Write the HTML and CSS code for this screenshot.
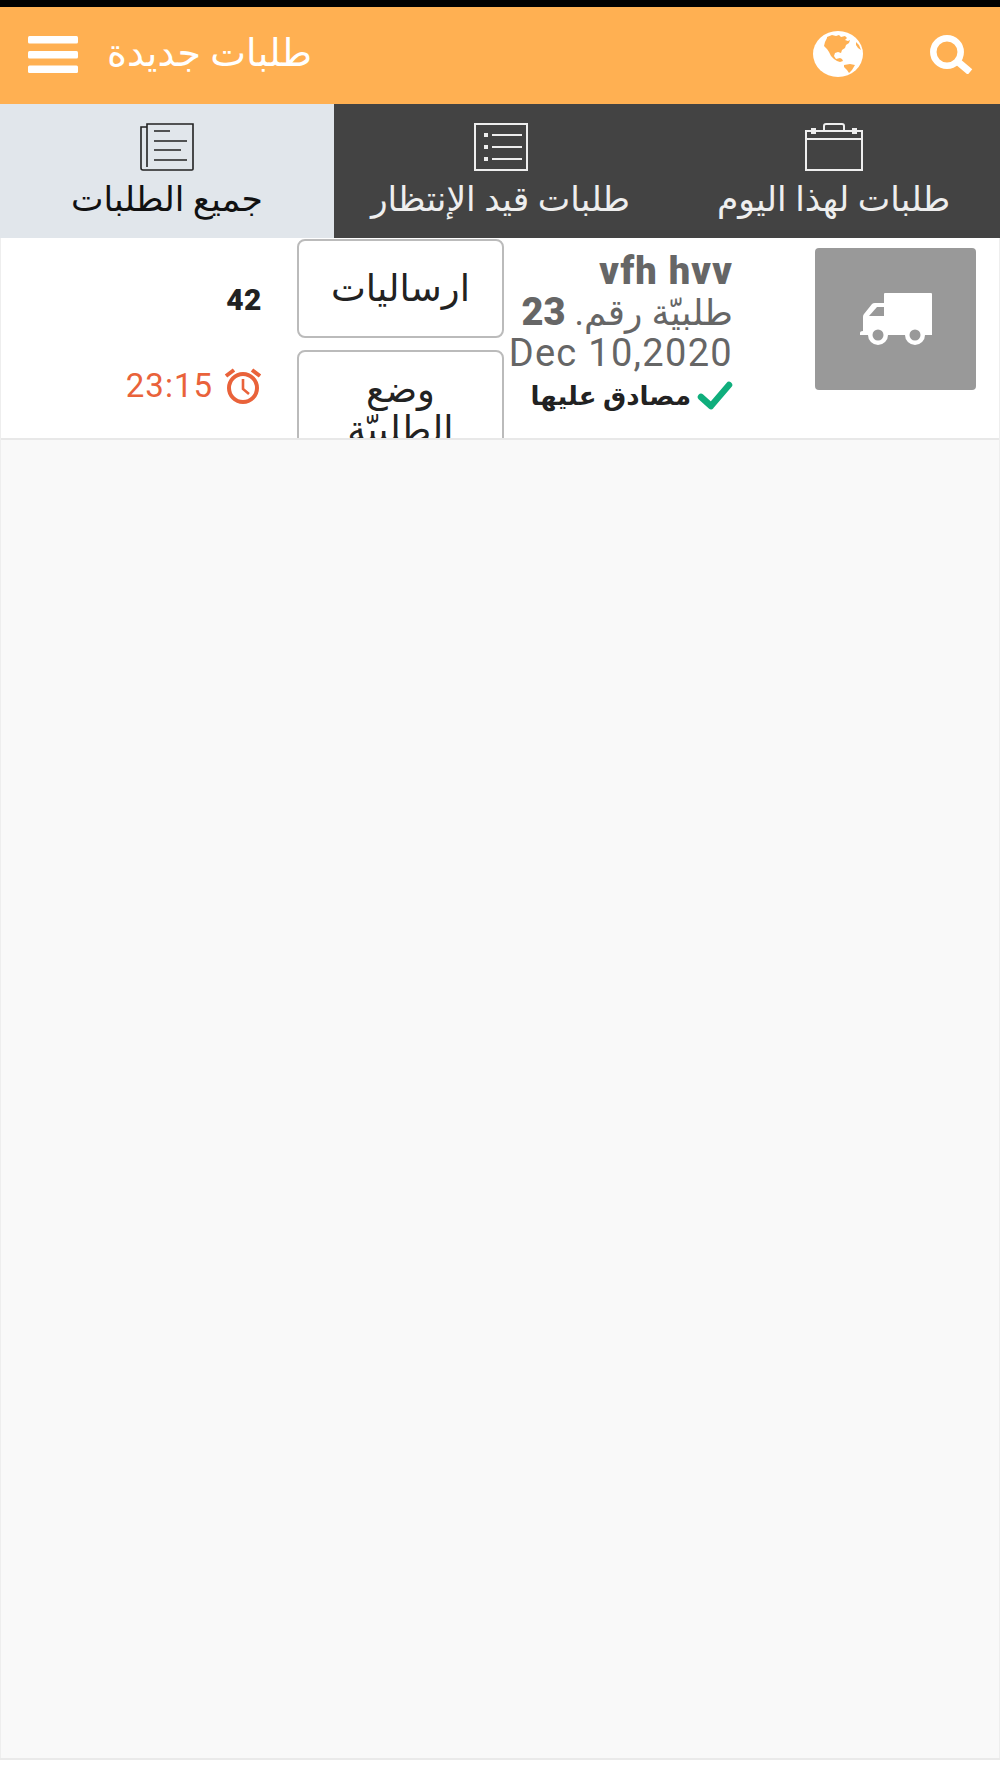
FILE: index.html
```html
<!DOCTYPE html>
<html lang="ar">
<head>
  <meta charset="UTF-8" />
  <title>طلبات جديدة</title>
  <link rel="stylesheet" href="styles.css">
</head>
<body>

<div class="status-bar"></div>

<header class="topbar">
  <div class="topbar-start">
    <svg class="menu-icon" viewBox="0 0 50 37"><rect x="0" y="0" width="50" height="7.5" rx="1.5"/><rect x="0" y="15" width="50" height="7.5" rx="1.5"/><rect x="0" y="29.5" width="50" height="7.5" rx="1.5"/></svg>
    <span class="topbar-title">طلبات جديدة</span>
  </div>
  <div class="topbar-end">
    <svg class="globe-icon" viewBox="0 0 50 46">
      <ellipse cx="25" cy="23" rx="25" ry="23" fill="#fff"/>
      <path fill="#ffb052" d="M14 6l5-2 4 1 3-1 2 2 4-1 2 2-2 2 3 1 2-1-1 3-3 2-1 3-3 2-1 3-3-1-3 1-1 3 2 3 4-1 2 1 1 2-3 1-3-1-3-2-3-3-2-4-2-3-3-3 1-4 2-4z"/>
      <path fill="#ffb052" d="M31 34l6-1 5 1-3 5-3 3-2-3-3-3zM43 11l3 3 2 5-3-2-2-3z"/>
    </svg>
    <svg class="search-icon" viewBox="0 0 43 39">
      <circle cx="17" cy="17" r="13.7" fill="none" stroke="#fff" stroke-width="6.5"/>
      <path d="M27 26l13 11" stroke="#fff" stroke-width="7" fill="none"/>
    </svg>
  </div>
</header>

<nav class="tabs">
  <div class="tab tab-active">
    <svg class="tab-icon" viewBox="0 0 54 48" fill="none" stroke="#222" stroke-width="1.6">
      <path d="M7 4H1v41q0 2 2 2h49q1 0 1-1V1H7v43"/>
      <path d="M14 8h16M14 18h33M14 27h27M14 37h33"/>
    </svg>
    <span class="tab-label">جميع الطلبات</span>
  </div>
  <div class="tab">
    <svg class="tab-icon" viewBox="0 0 54 48" fill="none" stroke="#eee" stroke-width="2">
      <rect x="1" y="1" width="52" height="46"/>
      <path d="M18 12h30M18 24h30M18 36h30"/>
      <path d="M10 12h4M10 24h4M10 36h4" stroke-width="4"/>
    </svg>
    <span class="tab-label">طلبات قيد الإنتظار</span>
  </div>
  <div class="tab">
    <svg class="tab-icon tab-icon-wide" viewBox="0 0 58 48" fill="none" stroke="#eee" stroke-width="2">
      <rect x="1" y="8" width="56" height="39"/>
      <path d="M1 16h56"/>
      <path d="M19 8V3q0-2 2-2h16q2 0 2 2v5"/>
      <path d="M6 5h5v6H6zM47 5h5v6h-5z" fill="#eee" stroke="none"/>
    </svg>
    <span class="tab-label">طلبات لهذا اليوم</span>
  </div>
</nav>

<main class="content">
  <section class="order">
    <div class="order-thumb">
      <svg class="truck-icon" viewBox="0 0 72 52">
        <path fill="#fff" d="M24 1q0-1 1-1h46q1 0 1 1v41H2l-2 0v-2q0-2 3-2V24q0-2 1-3l8-10q1-1 3-1h9z"/>
        <path fill="#999" d="M17 14h7v9H9z"/>
        <circle cx="18" cy="42" r="10" fill="#fff"/><circle cx="18" cy="42" r="5.5" fill="#999"/>
        <circle cx="55" cy="42" r="10" fill="#fff"/><circle cx="55" cy="42" r="5.5" fill="#999"/>
      </svg>
    </div>
    <div class="order-info">
      <div class="order-name">vfh hvv</div>
      <div class="order-line">طلبيّة رقم. <b>23</b></div>
      <div class="order-line order-date">Dec 10,2020</div>
      <div class="order-status">
        <svg class="check-icon" viewBox="0 0 36 30"><path d="M4 16l10 9L32 4" fill="none" stroke="#0fae7c" stroke-width="6.5" stroke-linecap="round" stroke-linejoin="round"/></svg>
        <span>مصادق عليها</span>
      </div>
    </div>
    <div class="order-actions">
      <div class="order-btn">ارساليات</div>
      <div class="order-btn order-btn-tall">وضع الطلبيّة</div>
    </div>
    <div class="order-side">
      <div class="order-count">42</div>
      <div class="order-time">
        <svg class="alarm-icon" viewBox="0 0 38 36" fill="none" stroke="#e9623a">
          <circle cx="19" cy="20" r="14" stroke-width="4"/>
          <path d="M19 11v10l6 5" stroke-width="2.6"/>
          <path d="M2 8l8-6M36 8l-8-6" stroke-width="4"/>
        </svg>
        <span>23:15</span>
      </div>
    </div>
  </section>
</main>

<div class="bottom-strip"></div>

</body>
</html>
```

FILE: styles.css
```css
body {
  margin: 0;
  height: 1778px;
  display: flex;
  flex-direction: column;
  background-color: #fff;
  font-family: Roboto, "DejaVu Sans", sans-serif;
  overflow: hidden;
}

.status-bar {
  height: 7px;
  background-color: #000;
}

.topbar {
  height: 97px;
  box-sizing: border-box;
  padding: 0 27px 3px 28px;
  display: flex;
  align-items: center;
  justify-content: space-between;
  background-color: #ffb052;
}

.topbar-start,
.topbar-end {
  display: flex;
  align-items: center;
}

.topbar-title {
  margin: 0 0 2px 29px;
  color: #fff;
  font-size: 38px;
  line-height: 44px;
}

.menu-icon {
  width: 50px;
  height: 37px;
  fill: #fff;
}

.globe-icon {
  width: 50px;
  height: 46px;
  margin-right: 67px;
}

.search-icon {
  width: 43px;
  height: 39px;
}

.tabs {
  height: 134px;
  display: flex;
  background-color: #434343;
  color: #eee;
}

.tab {
  flex: 1;
  display: flex;
  flex-direction: column;
  align-items: center;
  padding-top: 19px;
  box-sizing: border-box;
}

.tab-active {
  flex: 0 0 334px;
  background-color: #e1e6eb;
  color: #111;
}

.tab-icon {
  width: 54px;
  height: 48px;
}

.tab-icon-wide {
  width: 58px;
}

.tab-label {
  margin-top: 8px;
  font-size: 34.5px;
  line-height: 40px;
  white-space: nowrap;
}

.content {
  flex: 1;
  background-color: #f9f9f9;
  border-left: 1px solid #eee;
  border-right: 1px solid #eee;
}

.order {
  height: 202px;
  box-sizing: border-box;
  border-bottom: 2px solid #e8e8e8;
  background-color: #fff;
  display: flex;
  direction: rtl;
  overflow: hidden;
}

.order-thumb {
  width: 161px;
  height: 142px;
  margin: 10px 23px 0 0;
  border-radius: 4px;
  background-color: #999;
  display: flex;
  align-items: center;
  justify-content: center;
}

.truck-icon {
  width: 72px;
  height: 52px;
}

.order-info {
  width: 228px;
  margin-right: 82px;
  padding-top: 13px;
  color: #666;
  font-size: 36px;
  line-height: 40.5px;
  white-space: nowrap;
}

.order-name {
  font-weight: 900;
  font-size: 38px;
  letter-spacing: 1.2px;
}

.order-line b {
  font-weight: 900;
  font-size: 38px;
}

.order-date {
  font-size: 38px;
  letter-spacing: 1.3px;
}

.order-status {
  display: flex;
  align-items: center;
  gap: 6px;
  margin-top: 2px;
  color: #222;
  font-size: 26px;
  font-weight: bold;
}

.check-icon {
  width: 36px;
  height: 30px;
}

.order-actions {
  width: 207px;
  flex-shrink: 0;
  margin-right: 1px;
  padding-top: 1px;
  display: flex;
  flex-direction: column;
  gap: 12px;
}

.order-btn {
  flex-shrink: 0;
  box-sizing: border-box;
  height: 99px;
  border: 2px solid #bbb;
  border-radius: 8px;
  display: flex;
  align-items: center;
  justify-content: center;
  text-align: center;
  color: #222;
  font-size: 37px;
  line-height: 40px;
}

.order-btn-tall {
  height: 120px;
  padding: 0 40px;
}

.order-side {
  margin-right: 35px;
  padding-top: 44px;
}

.order-count {
  color: #222;
  font-size: 30px;
  font-weight: 900;
  letter-spacing: 0.5px;
  line-height: 36px;
}

.order-time {
  margin-top: 49px;
  display: flex;
  align-items: center;
  gap: 11px;
  color: #e9623a;
  font-size: 33px;
  letter-spacing: 1px;
  line-height: 38px;
}

.alarm-icon {
  width: 38px;
  height: 36px;
}

.bottom-strip {
  height: 20px;
  box-sizing: border-box;
  border-top: 2px solid #eaeaea;
  background-color: #fff;
}
```
